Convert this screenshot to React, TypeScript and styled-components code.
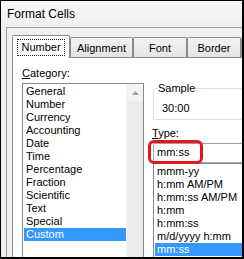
import styled, { createGlobalStyle } from 'styled-components';

const GlobalStyle = createGlobalStyle`
  * { box-sizing: border-box; }
  html, body { margin: 0; padding: 0; background: #fff; }
  body {
    font-family: "Liberation Sans", Arial, sans-serif;
    font-size: 11px;
    color: #000;
  }
`;

const Frame = styled.div`
  width: 244px;
  height: 259px;
  overflow: hidden;
  border: 1px solid #000;
  border-right-width: 2px;
  border-bottom-width: 2px;
  background: linear-gradient(#f8f8f8, #efefef 26px);
  display: flex;
  flex-direction: column;
`;

const TitleBar = styled.div`
  flex: none;
  height: 26px;
  padding-left: 6px;
  font-size: 12px;
  line-height: 26px;
  color: #000;
`;

const Dialog = styled.div`
  flex: 1;
  min-width: 0;
  margin-left: 5px;
  border-left: 1px solid #9c9c9c;
  border-top: 1px solid #9c9c9c;
  background: #f0f0f0;
  padding: 7px 0 0 5px;
  display: flex;
  flex-direction: column;
`;

const TabRow = styled.div`
  flex: none;
  height: 22px;
  display: flex;
  align-items: flex-end;
  position: relative;
  z-index: 1;
`;

const Tab = styled.div<{ $w: number; $active?: boolean }>`
  flex: none;
  width: ${(p) => p.$w}px;
  height: ${(p) => (p.$active ? 23 : 20)}px;
  margin-bottom: ${(p) => (p.$active ? -1 : 0)}px;
  padding-top: ${(p) => (p.$active ? 0 : 2)}px;
  border: 1px solid #898c95;
  border-bottom: none;
  border-radius: 2px 2px 0 0;
  background: ${(p) => (p.$active ? '#fff' : 'linear-gradient(#f3f3f3, #e3e3e3)')};
  display: flex;
  align-items: center;
  justify-content: center;
  line-height: 13px;
  white-space: nowrap;
`;

const FocusLabel = styled.span`
  padding: 1px 3px;
  border: 1px dotted #222;
`;

const Panel = styled.div`
  flex: 1;
  margin-right: -60px;
  background: #fff;
  border-left: 1px solid #898c95;
  border-top: 1px solid #898c95;
  padding: 9px 0 0 9px;
  display: flex;
  gap: 8px;
`;

const LeftColumn = styled.div`
  flex: none;
  width: 122px;
  display: flex;
  flex-direction: column;
`;

const RightColumn = styled.div`
  flex: 1;
  position: relative;
  display: flex;
  flex-direction: column;
`;

const Label = styled.div<{ $top?: number }>`
  line-height: 13px;
  height: 13px;
  margin-top: ${(p) => p.$top ?? 0}px;
`;

const ListBox = styled.div<{ $top?: number; $left?: number }>`
  margin-top: ${(p) => p.$top ?? 0}px;
  margin-left: ${(p) => p.$left ?? 0}px;
  height: 190px;
  border: 1px solid #828790;
  display: flex;
  overflow: hidden;
`;

const Items = styled.div`
  flex: 1;
  padding: 1px 0 0 1px;
`;

const Item = styled.div<{ $selected?: boolean }>`
  height: 13px;
  line-height: 13px;
  padding-left: 2px;
  white-space: nowrap;
  background: ${(p) => (p.$selected ? '#3399ff' : 'transparent')};
  color: ${(p) => (p.$selected ? '#fff' : '#000')};
`;

const ScrollBar = styled.div`
  flex: none;
  width: 17px;
  background: #ececec;
  border-left: 1px solid #f4f4f4;
`;

const ScrollButton = styled.div`
  height: 17px;
  display: flex;
  align-items: center;
  justify-content: center;
  background: #f3f3f3;
`;

const GroupBox = styled.fieldset`
  margin: 15px 0 0 1px;
  padding: 7px 0 4px 8px;
  min-width: 0;
  border: 1px solid #d5dfe5;
  border-radius: 3px;
`;

const Legend = styled.legend`
  margin-left: -5px;
  padding: 0 1px;
  line-height: 13px;
`;

const SampleValue = styled.div`
  line-height: 13px;
`;

const TextBox = styled.div`
  margin: 3px 0 0 1px;
  height: 20px;
  border: 1px solid #abadb3;
  border-top-color: #9a9da5;
  padding: 2px 3px 0;
  line-height: 13px;
`;

const Highlight = styled.div`
  position: absolute;
  left: -4px;
  top: 73px;
  width: 55px;
  height: 24px;
  border: 3px solid #e3161e;
  border-radius: 6px;
  z-index: 2;
`;

const categories = [
  'General',
  'Number',
  'Currency',
  'Accounting',
  'Date',
  'Time',
  'Percentage',
  'Fraction',
  'Scientific',
  'Text',
  'Special',
  'Custom',
];

const types = ['mmm-yy', 'h:mm AM/PM', 'h:mm:ss AM/PM', 'h:mm', 'h:mm:ss', 'm/d/yyyy h:mm', 'mm:ss'];

export default function App() {
  return (
    <>
      <GlobalStyle />
      <Frame>
        <TitleBar>Format Cells</TitleBar>
        <Dialog>
          <TabRow>
            <Tab $w={58} $active>
              <FocusLabel>Number</FocusLabel>
            </Tab>
            <Tab $w={63}>Alignment</Tab>
            <Tab $w={54}>Font</Tab>
            <Tab $w={54}>Border</Tab>
            <Tab $w={40} />
          </TabRow>
          <Panel>
            <LeftColumn>
              <Label>
                <u>C</u>ategory:
              </Label>
              <ListBox $top={3}>
                <Items>
                  {categories.map((c) => (
                    <Item key={c} $selected={c === 'Custom'}>
                      {c}
                    </Item>
                  ))}
                </Items>
                <ScrollBar>
                  <ScrollButton>
                    <svg width="7" height="4" viewBox="0 0 7 4">
                      <path d="M0 4 L3.5 0 L7 4 Z" fill="#a3a3a3" />
                    </svg>
                  </ScrollButton>
                </ScrollBar>
              </ListBox>
            </LeftColumn>
            <RightColumn>
              <GroupBox>
                <Legend>Sample</Legend>
                <SampleValue>30:00</SampleValue>
              </GroupBox>
              <Label $top={7}>
                <u>T</u>ype:
              </Label>
              <TextBox>mm:ss</TextBox>
              <ListBox $left={1}>
                <Items>
                  {types.map((t) => (
                    <Item key={t} $selected={t === 'mm:ss'}>
                      {t}
                    </Item>
                  ))}
                </Items>
              </ListBox>
              <Highlight />
            </RightColumn>
          </Panel>
        </Dialog>
      </Frame>
    </>
  );
}
